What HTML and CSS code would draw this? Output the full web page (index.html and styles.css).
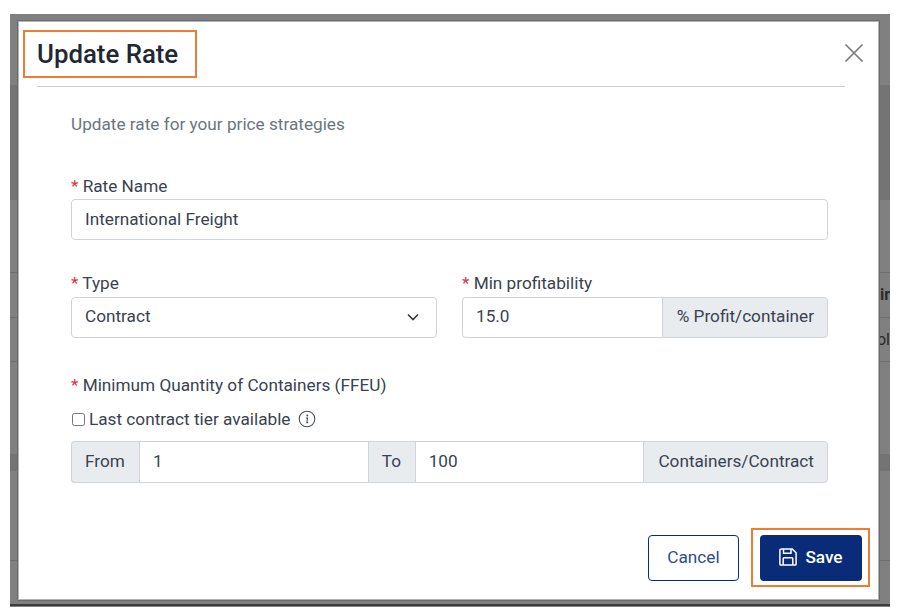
FILE: index.html
```html
<!DOCTYPE html>
<html lang="en">
  <head>
    <meta charset="utf-8" />
    <title>Update Rate</title>
    <link rel="stylesheet" href="styles.css">
  </head>
  <body>
    <!--Page behind the modal, only the edges show-->
    <div class="backdrop">
      <div class="bgRow top"></div>
      <div class="bgRow band first"></div>
      <div class="bgRow lined second"></div>
      <div class="bgRow lined third"><b>ir</b></div>
      <div class="bgRow lined fourth"><span>ol</span></div>
      <div class="bgRow fifth"></div>
      <div class="bgRow band sixth"></div>
      <div class="bgRow lined seventh"></div>
      <div class="bgRow eighth"></div>
      <div class="bgRow darkLine"></div>
      <div class="bgRow last"></div>

      <div class="modal">
        <div class="modalHead">
          <h1 class="title">Update Rate</h1>
          <button class="close" type="button" aria-label="Close">
            <svg width="20" height="20" viewBox="0 0 20 20"><path d="M1.5 1.5 18.500 18.500M18.500 1.500 1.500 18.500" fill="none" stroke="#7b7b7b" stroke-width="1.700"/></svg>
          </button>
        </div>

        <form class="modalBody" action="#">
          <p class="intro">Update rate for your price strategies</p>

          <label class="label" for="rateName"><span class="req">*</span> Rate Name</label>
          <input class="field" id="rateName" type="text" value="International Freight">

          <div class="twoCols">
            <div>
              <label class="label" for="type"><span class="req">*</span> Type</label>
              <div class="selectWrap">
                <select class="field" id="type"><option>Contract</option></select>
                <svg class="chevron" width="12" height="8" viewBox="0 0 12 8"><path d="M1 1.500 6 6.500 11 1.500" fill="none" stroke="#343a40" stroke-width="1.600"/></svg>
              </div>
            </div>
            <div>
              <label class="label" for="minProfit"><span class="req">*</span> Min profitability</label>
              <div class="group">
                <input class="field" id="minProfit" type="text" value="15.0">
                <span class="addon">% Profit/container</span>
              </div>
            </div>
          </div>

          <label class="label qty" for="from"><span class="req">*</span> Minimum Quantity of Containers (FFEU)</label>
          <div class="checkRow">
            <input class="check" id="lastTier" type="checkbox">
            <label for="lastTier">Last contract tier available</label>
            <svg class="info" width="18" height="18" viewBox="0 0 18 18">
              <circle cx="9" cy="9" r="7.800" fill="none" stroke="#4a5260" stroke-width="1.100"/>
              <circle cx="9.300" cy="5.500" r="1" fill="#4a5260"/>
              <path d="M7.800 8h1.700l-.6 4.600h1.300" fill="none" stroke="#4a5260" stroke-width="1.100"/>
            </svg>
          </div>
          <div class="group">
            <span class="addon fromAddon">From</span>
            <input class="field" id="from" type="text" value="1">
            <span class="addon toAddon">To</span>
            <input class="field" id="to" type="text" value="100">
            <span class="addon">Containers/Contract</span>
          </div>

          <div class="modalFoot">
            <button class="btn cancel" type="button">Cancel</button>
            <div class="saveMark">
              <button class="btn save" type="button">
                <svg width="18" height="18" viewBox="0 0 18 18" fill="none" stroke="#fff" stroke-width="1.500"><path d="M1.800.9h11.400l3.900 3.900v11.100a1.200 1.200 0 0 1-1.200 1.200H2.100a1.200 1.200 0 0 1-1.200-1.200V2.100A1.200 1.200 0 0 1 2.100.9Z"/><path d="M4.500 1v4.200h7.500V1"/><path d="M4.200 16.900v-6.300a.9.900 0 0 1 .9-.9h7.800a.9.900 0 0 1 .9.900v6.300"/></svg>
                Save
              </button>
            </div>
          </div>
        </form>
      </div>
    </div>
  </body>
</html>
```
FILE: styles.css
```css
* {box-sizing: border-box;}

body {margin: 0;
      background-color: white;
      font-family: Roboto, 'Liberation Sans', sans-serif;
      font-size: 17.2px;
      line-height: 24px;
      color: #3a4250;}

/* page behind the modal */
.backdrop {position: relative;
           width: 880px;
           height: 593px;
           margin: 14px 0 0 10px;
           background-color: #808080;
           overflow: hidden;}

.bgRow {display: flex;
        justify-content: flex-end;
        align-items: center;
        color: #2a2a2a;
        font-size: 16px;}

.lined {border-bottom: 1px solid #6e6e6e;}
.band {background-color: #747474;}

.top {height: 71px;}
.first {height: 115px;}
.second {height: 73px;}
.third {height: 45px;}
.fourth {height: 44px;}
.fifth {height: 92px;}
.sixth {height: 17px;}
.seventh {height: 90px;}
.eighth {height: 43px;}
.darkLine {height: 2px; background-color: #3c3c3c;}
.last {height: 2px;}

/* modal */
.modal {position: absolute;
        left: 8px;
        top: 7px;
        width: 861px;
        height: 579px;
        background-color: white;
        border: 1px solid #b4b4b4;
        box-shadow: 0 0 0 1px #6a6a6a;}

.modalHead {display: flex;
            justify-content: space-between;
            align-items: center;
            margin: 0 33px 0 18px;
            padding: 8px 0 8px;
            border-bottom: 1px solid #cfcfcf;}

.title {width: 174px;
        height: 48px;
        margin: 0 0 0 -14px;
        padding-left: 12px;
        border: 2px solid #ed7d31;
        font-size: 25.8px;
        font-weight: 500;
        line-height: 44px;
        color: #212735;}

.close {padding: 0;
        margin: -2px -19px 0 0;
        border: none;
        background: none;
        display: flex;}

.modalBody {padding: 25px 50px 0 52px;}

.intro {margin: 0 0 38px;
        color: #6c757d;}

.label {display: block;
        margin-bottom: 1px;}

.req {color: #dc3545;}

.field {display: block;
        width: 100%;
        height: 41px;
        padding: 0 13px 2px;
        border: 1px solid #ced4da;
        border-radius: 4px;
        background-color: white;
        font-family: inherit;
        font-size: 17.2px;
        color: #3a4250;
        appearance: none;}

.twoCols {display: grid;
          grid-template-columns: 366px 366px;
          gap: 25px;
          margin-top: 31px;}

.twoCols .label {margin-bottom: 2px;}

.twoCols .field {padding-bottom: 3px;}

.selectWrap {position: relative;}

.chevron {position: absolute;
          right: 18px;
          top: 16px;}

.group {display: flex;
        height: 42px;}

.twoCols .group {height: 41px;}

.group .field {flex: 1;
               min-width: 0;
               height: 100%;
               border-radius: 0;
               border-right: none;}

.group .field:first-child {border-radius: 4px 0 0 4px;}

.addon {display: flex;
        align-items: center;
        padding: 0 13px 2px;
        background-color: #e9ecef;
        border: 1px solid #ced4da;
        white-space: nowrap;}

.twoCols .addon {padding-bottom: 3px;}

.addon:last-child {padding-left: 14px;
                   border-radius: 0 4px 4px 0;}

.fromAddon {width: 68px;
            border-radius: 4px 0 0 4px;
            border-right: none;}

.toAddon {width: 47px;
          border-right: none;}

.qty {margin-top: 35px;
      margin-bottom: 10px;}

.checkRow {display: flex;
           align-items: center;
           height: 24px;
           margin-bottom: 10px;}

.check {width: 13px;
        height: 13px;
        margin: 0 4px 0 1px;}

.info {margin-left: 8px;}

.modalFoot {display: flex;
            justify-content: flex-end;
            align-items: flex-start;
            gap: 12px;
            margin: 45px -42px 0 0;}

.btn {height: 46px;
      margin: 0;
      padding: 0 0 2px;
      border-radius: 4px;
      font-family: inherit;
      font-size: 17.2px;
      cursor: pointer;}

.cancel {width: 91px;
         margin-top: 7px;
         background-color: white;
         border: 1px solid #0a2c78;
         color: #2f4c88;}

.saveMark {padding: 5px 6px 4px 7px;
           border: 2px solid #ed7d31;}

.save {display: flex;
       align-items: center;
       justify-content: center;
       gap: 8px;
       width: 102px;
       background-color: #0a2c78;
       border: none;
       color: white;
       font-weight: 500;}
```
